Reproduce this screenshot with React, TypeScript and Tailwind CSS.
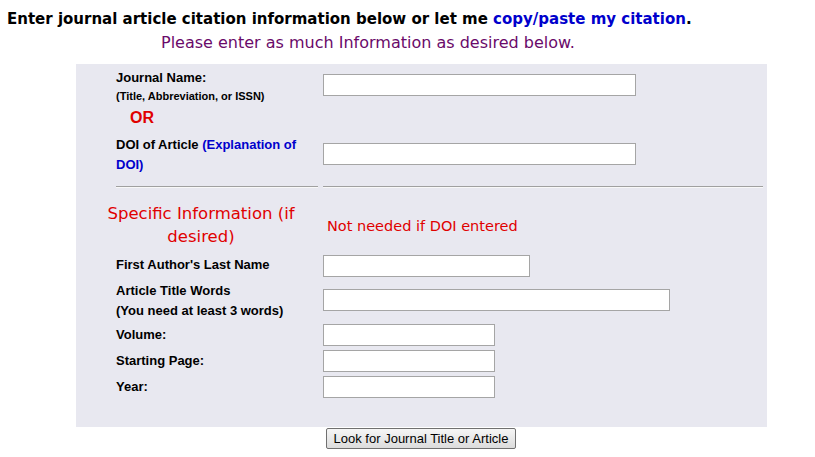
import React from "react";

const lbl = "font-bold text-[13px] text-black";
const inp = "h-[22px] border border-[#a5a5a5] bg-white block";

export default function App() {
  return (
    <div className="w-[815px] h-[457px] bg-white relative overflow-hidden" style={{ fontFamily: '"Liberation Sans", Arial, sans-serif' }}>
      <div className="pt-[9px] pl-[7px] text-[15px] font-bold leading-[20px] text-black whitespace-nowrap" style={{ fontFamily: '"DejaVu Sans", sans-serif' }}>
        Enter journal article citation information below or let me <span className="text-[#0000cc]">copy/paste my citation</span>.
      </div>
      <div className="pl-[161px] pt-[4px] text-[16px] leading-[20px] text-[#6a0a6a] whitespace-nowrap" style={{ fontFamily: '"DejaVu Sans", sans-serif' }}>
        Please enter as much Information as desired below.
      </div>
      <div className="ml-[76px] mt-[11px] w-[691px] bg-[#e8e8f0] pt-[5px] pb-[29px] pl-[40px]">
        <div className="flex">
          <div className="w-[207px]">
            <div className={`${lbl} leading-[18px]`}>Journal Name:</div>
            <div className="font-bold text-[11px] leading-[18px]">(Title, Abbreviation, or ISSN)</div>
          </div>
          <input className={`${inp} w-[313px] mt-[5px]`} />
        </div>
        <div className="mt-[3px] ml-[14px] text-[16px] leading-[20px] text-[#e00000] font-bold">OR</div>
        <div className="flex mt-[7px]">
          <div className={`w-[202px] mr-[5px] ${lbl} leading-[20px]`}>
            <div className="whitespace-nowrap">
              <span>DOI of Article </span>
              <span className="text-[#0000cc]">(Explanation of</span>
            </div>
            <div className="text-[#0000cc]">DOI)</div>
          </div>
          <input className={`${inp} w-[313px] mt-[8px]`} />
        </div>
        <div className="flex mt-[11px]">
          <div className="w-[202px] h-[2px] border-t border-[#a0a0a0] border-b border-b-[#f8f8f8]" />
          <div className="w-[440px] ml-[5px] h-[2px] border-t border-[#a0a0a0] border-b border-b-[#f8f8f8]" />
        </div>
        <div className="flex mt-[14px]">
          <div className="-ml-[16px] w-[202px] text-center text-[16.5px] leading-[23px] text-[#e00000]" style={{ fontFamily: '"DejaVu Sans", sans-serif' }}>
            Specific Information (if desired)
          </div>
          <div className="ml-[25px] mt-[14px] text-[14.5px] leading-[20px] text-[#e00000] whitespace-nowrap" style={{ fontFamily: '"DejaVu Sans", sans-serif' }}>
            Not needed if DOI entered
          </div>
        </div>
        <div className="flex mt-[7px]">
          <div className={`w-[207px] ${lbl} leading-[20px]`}>First Author's Last Name</div>
          <input className={`${inp} w-[207px]`} />
        </div>
        <div className="flex mt-[4px]">
          <div className={`w-[207px] ${lbl} leading-[20px]`}>
            <div>Article Title Words</div>
            <div>(You need at least 3 words)</div>
          </div>
          <input className={`${inp} w-[347px] mt-[8px]`} />
        </div>
        <div className="flex mt-[3px]">
          <div className={`w-[207px] ${lbl} leading-[22px]`}>Volume:</div>
          <input className={`${inp} w-[172px]`} />
        </div>
        <div className="flex mt-[4px]">
          <div className={`w-[207px] ${lbl} leading-[22px]`}>Starting Page:</div>
          <input className={`${inp} w-[172px]`} />
        </div>
        <div className="flex mt-[4px]">
          <div className={`w-[207px] ${lbl} leading-[22px]`}>Year:</div>
          <input className={`${inp} w-[172px]`} />
        </div>
      </div>
      <div className="flex pl-[326px] pt-[1px]">
        <button className="w-[190px] h-[21px] border border-[#707070] rounded-[2px] bg-gradient-to-b from-[#f6f6f6] to-[#dcdcdc] text-[13px] text-black leading-[19px]">
          Look for Journal Title or Article
        </button>
      </div>
    </div>
  );
}
